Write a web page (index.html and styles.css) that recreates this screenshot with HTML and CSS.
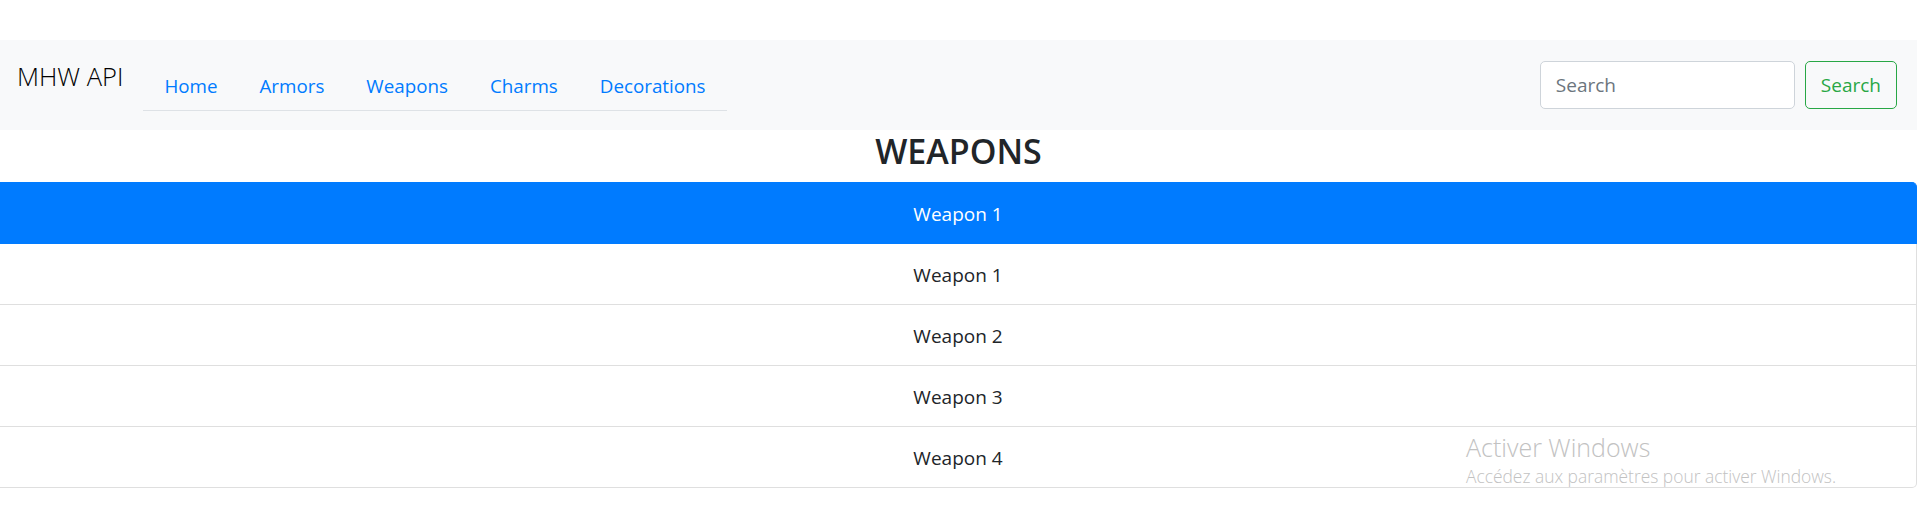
FILE: index.html
```html
<!DOCTYPE html>
<html lang="en">
<head>
<meta charset="utf-8">
<title>MHW API</title>
<link rel="stylesheet" href="styles.css">
</head>
<body>
<nav class="navbar">
  <a class="brand" href="#">MHW API</a>
  <ul class="tabs">
    <li><a class="tab-link" href="#">Home</a></li>
    <li><a class="tab-link" href="#">Armors</a></li>
    <li><a class="tab-link" href="#">Weapons</a></li>
    <li><a class="tab-link" href="#">Charms</a></li>
    <li><a class="tab-link" href="#">Decorations</a></li>
  </ul>
  <form class="search">
    <input class="search-input" type="search" placeholder="Search">
    <button class="search-btn" type="button">Search</button>
  </form>
</nav>
<main>
  <h3 class="title">WEAPONS</h3>
  <ul class="list">
    <li class="list-item active">Weapon 1</li>
    <li class="list-item">Weapon 1</li>
    <li class="list-item">Weapon 2</li>
    <li class="list-item">Weapon 3</li>
    <li class="list-item">Weapon 4</li>
  </ul>
</main>
<div class="watermark">
  <div class="wm-title">Activer Windows</div>
  <div class="wm-sub">Accédez aux paramètres pour activer Windows.</div>
</div>
</body>
</html>
```
FILE: styles.css
```css
html, body {
  margin: 0;
  padding: 0;
  background: #fff;
}
body {
  font-family: "Segoe UI", "Open Sans", "Noto Sans", sans-serif;
  color: #212529;
  padding-top: 41px;
  position: relative;
  min-height: 486px;
}
.navbar {
  display: flex;
  align-items: center;
  box-sizing: border-box;
  height: 90px;
  margin-top: -1px;
  padding: 10px 20px 10px 17px;
  background: #f8f9fa;
}
.brand {
  align-self: flex-start;
  font-size: 25.5px;
  font-weight: 300;
  line-height: 38px;
  padding: 6px 0 6px;
  margin-top: 1px;
  margin-right: 20px;
  color: #000;
  text-decoration: none;
}
.tabs {
  display: flex;
  list-style: none;
  margin: 0;
  padding: 0;
  border-bottom: 1px solid #dee2e6;
}
.tab-link {
  display: block;
  padding: 11px 20px 9px;
  border: 1px solid transparent;
  margin-bottom: -1px;
  font-size: 18.8px;
  line-height: 30px;
  color: #007bff;
  text-decoration: none;
}
.search {
  margin: 0 0 0 auto;
  display: flex;
  gap: 10px;
}
.search-input {
  box-sizing: border-box;
  width: 255px;
  height: 48px;
  padding: 7px 15px;
  border: 1px solid #ced4da;
  border-radius: 5px;
  background: #fff;
  font-family: inherit;
  font-size: 19px;
  color: #495057;
  outline: none;
}
.search-input::placeholder {
  color: #6c757d;
  opacity: 1;
}
.search-btn {
  box-sizing: border-box;
  height: 48px;
  padding: 0 15px;
  border: 1px solid #28a745;
  border-radius: 5px;
  background: transparent;
  color: #28a745;
  font-family: inherit;
  font-size: 19px;
}
.title {
  margin: 0 0 10px;
  padding-top: 1px;
  text-align: center;
  font-size: 34px;
  font-weight: 600;
  line-height: 41px;
}
.list {
  list-style: none;
  margin: 0;
  padding: 0;
}
.list-item {
  padding: 16px 25px 14px;
  font-size: 19px;
  line-height: 30px;
  text-align: center;
  border: 1px solid rgba(0, 0, 0, 0.125);
  border-left: none;
  border-top-width: 0;
  background: #fff;
}
.list-item:first-child {
  border-top-width: 1px;
  border-top-right-radius: 5px;
}
.list-item:last-child {
  border-bottom-right-radius: 5px;
}
.list-item.active {
  background: #007bff;
  border-color: #007bff;
  color: #fff;
}
.watermark {
  position: absolute;
  left: 1466px;
  top: 430px;
  color: #c2c2c2;
  font-weight: 300;
  pointer-events: none;
}
.wm-title {
  font-size: 25px;
  line-height: 34px;
}
.wm-sub {
  font-size: 17.4px;
  line-height: 24px;
}
```
